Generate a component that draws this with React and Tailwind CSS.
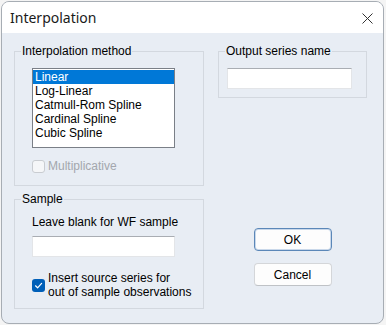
export default function App() {
  const items = ["Linear", "Log-Linear", "Catmull-Rom Spline", "Cardinal Spline", "Cubic Spline"];

  return (
    <div className="w-[386px] h-[325px] bg-[#f4f4f4] pt-[1px] pl-[1px] overflow-hidden" style={{ fontFamily: '"Liberation Sans", Arial, sans-serif' }}>
      <div className="w-[383px] h-[323px] rounded-[8px] border border-[#a7adb4] bg-[#e8edf4] overflow-hidden flex flex-col">
        {/* title bar */}
        <div className="h-[31px] bg-white flex items-center justify-between pl-[8px] pr-[10px] shrink-0">
          <span className="text-[14px] text-[#1a1a1a]" style={{ fontFamily: '"Noto Sans", "Open Sans", sans-serif' }}>Interpolation</span>
          <svg width="11" height="11" viewBox="0 0 11 11" className="mt-[2px]">
            <path d="M0.5 0.5 L10.5 10.5 M10.5 0.5 L0.5 10.5" stroke="#333" strokeWidth="1" fill="none" />
          </svg>
        </div>

        {/* body */}
        <div className="flex pl-[12px] pt-[11px] gap-[14px] text-[12px] text-black">
          <div className="flex flex-col gap-[6px] w-[190px]">
            <fieldset className="border border-[#d3d8df] h-[142px]">
              <legend className="ml-[6px] px-[1px] leading-[14px]">Interpolation method</legend>
              <div className="pl-[17px] pt-[10px]">
                <div className="w-[143px] h-[80px] bg-white border border-[#7a7f87] py-[1px]">
                  {items.map((t, i) => (
                    <div
                      key={t}
                      className={i === 0 ? "h-[14px] leading-[14px] px-[2px] bg-[#0078d7] text-white" : "h-[14px] leading-[14px] px-[2px]"}
                    >
                      {t}
                    </div>
                  ))}
                </div>
                <div className="flex items-center gap-[3px] mt-[11px]">
                  <div className="w-[13px] h-[13px] rounded-[3px] border border-[#c9ccd1] bg-[#f5f6f8]" />
                  <span className="text-[#a3a7ad] leading-[14px]">Multiplicative</span>
                </div>
              </div>
            </fieldset>

            <fieldset className="border border-[#d3d8df] h-[117px]">
              <legend className="ml-[6px] px-[1px] leading-[14px]">Sample</legend>
              <div className="pl-[17px] pt-[9px]">
                <div className="leading-[14px]">Leave blank for WF sample</div>
                <div className="w-[143px] h-[21px] bg-white border border-[#e3e5e8] border-t-[#a9adb3] mt-[7px]" />
                <div className="flex items-center gap-[3px] mt-[14px]">
                  <div className="w-[13px] h-[13px] rounded-[3px] bg-[#005fb8] flex items-center justify-center shrink-0">
                    <svg width="9" height="9" viewBox="0 0 9 9">
                      <path d="M1.5 4.8 L3.6 6.8 L7.6 2.4" stroke="white" strokeWidth="1.2" fill="none" strokeLinecap="round" strokeLinejoin="round" />
                    </svg>
                  </div>
                  <span className="leading-[14px]">Insert source series for<br />out of sample observations</span>
                </div>
              </div>
            </fieldset>
          </div>

          <div className="flex flex-col items-center w-[149px]">
            <fieldset className="border border-[#d3d8df] w-[149px] h-[54px]">
              <legend className="ml-[6px] px-[1px] leading-[14px]">Output series name</legend>
              <div className="pl-[8px] pt-[10px]">
                <div className="w-[125px] h-[21px] bg-white border border-[#e3e5e8] border-t-[#a9adb3]" />
              </div>
            </fieldset>

            <button className="mt-[130px] w-[78px] h-[23px] rounded-[4px] bg-[#fdfdfd] border border-[#5b87b8] text-[12px] text-black shadow-[inset_0_0_0_1px_#c9d8ea]">
              OK
            </button>
            <button className="mt-[12px] w-[78px] h-[23px] rounded-[4px] bg-[#fdfdfd] border border-[#d4d6d9] border-b-[#bfc2c6] text-[12px] text-black">
              Cancel
            </button>
          </div>
        </div>
      </div>
    </div>
  );
}
